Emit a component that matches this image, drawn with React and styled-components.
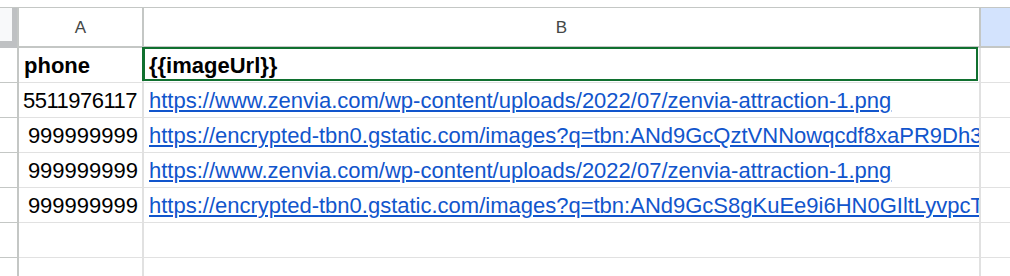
import React from 'react'
import styled, { createGlobalStyle } from 'styled-components'

const GlobalStyle = createGlobalStyle`
  html, body {
    margin: 0;
    padding: 0;
    background: #fff;
    overflow: hidden;
  }
`

const rows = [
  { phone: 'phone', url: '{{imageUrl}}', header: true },
  { phone: '5511976117', url: 'https://www.zenvia.com/wp-content/uploads/2022/07/zenvia-attraction-1.png', left: true },
  { phone: '999999999', url: 'https://encrypted-tbn0.gstatic.com/images?q=tbn:ANd9GcQztVNNowqcdf8xaPR9Dh3wMm0' },
  { phone: '999999999', url: 'https://www.zenvia.com/wp-content/uploads/2022/07/zenvia-attraction-1.png' },
  { phone: '999999999', url: 'https://encrypted-tbn0.gstatic.com/images?q=tbn:ANd9GcS8gKuEe9i6HN0GIltLyvpcTx2' },
  {},
  {},
]

function App() {
  return (
    <>
      <GlobalStyle />
      <Sheet>
        <Corner>
          <CornerFill />
        </Corner>
        <ColHead>A</ColHead>
        <ColHead>B</ColHead>
        <ColHead active />

        {rows.map((r, i) => (
          <React.Fragment key={i}>
            <RowHead />
            <Cell align={r.header || r.left ? 'left' : 'right'} bold={r.header} tight={r.left}>
              {r.phone}
            </Cell>
            <Cell bold={r.header} selected={r.header}>
              {r.header ? r.url : r.url && <Link href="#">{r.url}</Link>}
            </Cell>
            <Cell last />
          </React.Fragment>
        ))}
      </Sheet>
    </>
  )
}

export default App

const Sheet = styled.div`
  display: grid;
  grid-template-columns: 19px 125px 837px 29px;
  grid-auto-rows: 35px;
  grid-template-rows: 41px;
  padding-top: 7px;
  height: 276px;
  box-sizing: border-box;
  overflow: hidden;
`

const Corner = styled.div`
  box-sizing: border-box;
  border-top: 1px solid #c4c7c5;
  border-right: 2px solid #c4c7c5;
  background: #bfc1c3;
`

const CornerFill = styled.div`
  width: 12px;
  height: 33px;
  background: #f8f9fa;
`

const ColHead = styled.div`
  box-sizing: border-box;
  border-top: 1px solid #c4c7c5;
  border-bottom: 2px solid #c4c7c5;
  border-right: ${p => (p.active ? 'none' : '2px solid #c4c7c5')};
  background: ${p => (p.active ? '#d3e3fd' : '#fff')};
  display: flex;
  align-items: center;
  justify-content: center;
  font-family: 'Liberation Sans', Arial, sans-serif;
  font-size: 17px;
  color: #444746;
  padding-top: 1px;
`

const RowHead = styled.div`
  box-sizing: border-box;
  border-right: 2px solid #c4c7c5;
  border-bottom: 1px solid #c4c7c5;
`

const Cell = styled.div`
  box-sizing: border-box;
  position: relative;
  border-bottom: 1px solid #e1e1e1;
  border-right: ${p => (p.last ? 'none' : '2px solid #e1e1e1')};
  display: flex;
  align-items: flex-end;
  justify-content: ${p => (p.align === 'right' ? 'flex-end' : 'flex-start')};
  padding: 0 4px 5px ${p => (p.tight ? '4px' : '5px')};
  font-family: 'Liberation Sans', Arial, sans-serif;
  font-size: 22px;
  line-height: 22px;
  letter-spacing: ${p => (p.tight ? '-0.5px' : 'normal')};
  font-weight: ${p => (p.bold ? 700 : 400)};
  color: #000;
  white-space: nowrap;
  overflow: ${p => (p.selected ? 'visible' : 'hidden')};

  ${p =>
    p.selected &&
    `
    &::after {
      content: '';
      position: absolute;
      top: -1px;
      left: -2px;
      right: 1px;
      bottom: 1px;
      border: 2px solid #10702f;
      border-left-width: 3px;
      pointer-events: none;
    }
  `}
`

const Link = styled.a`
  color: #1155cc;
  text-decoration: underline;
  text-decoration-thickness: 2px;
  text-underline-offset: 2px;
`
